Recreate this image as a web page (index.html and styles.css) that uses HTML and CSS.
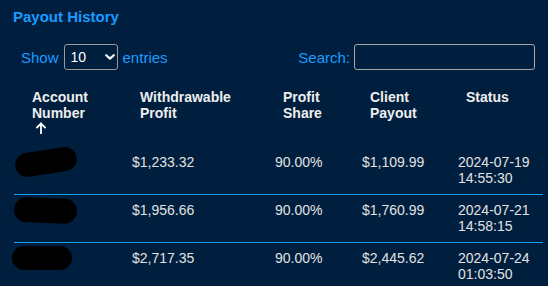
FILE: index.html
```html
<!DOCTYPE html>
<html lang="en">
<head>
<meta charset="utf-8">
<title>Payout History</title>
<link rel="stylesheet" href="styles.css">
</head>
<body>
<div class="panel">
  <h2 class="title">Payout History</h2>
  <div class="controls">
    <label class="length"><span>Show</span><span class="select-wrap"><select class="select"><option>10</option><option>25</option><option>50</option></select><svg class="chev" width="10" height="6" viewBox="0 0 10 6"><path d="M1.2 1.2 L5 4.6 L8.8 1.2" fill="none" stroke="#ffffff" stroke-width="2.2" stroke-linecap="round" stroke-linejoin="round"/></svg></span><span>entries</span></label>
    <label class="search"><span>Search:</span><input class="search-input" type="text"></label>
  </div>
  <table class="grid">
    <colgroup>
      <col class="c1"><col class="c2"><col class="c3"><col class="c4"><col class="c5">
    </colgroup>
    <thead>
      <tr>
        <th>Account Number<div class="sort"><svg width="10" height="12" viewBox="0 0 10 12"><path d="M5 11.5 V1.5 M1 5.5 L5 1.5 L9 5.5" fill="none" stroke="#ffffff" stroke-width="1.8" stroke-linecap="square"/></svg></div></th>
        <th>Withdrawable Profit</th>
        <th>Profit Share</th>
        <th>Client Payout</th>
        <th>Status</th>
      </tr>
    </thead>
    <tbody>
      <tr>
        <td class="acct"><span class="redact r1"></span></td>
        <td>$1,233.32</td>
        <td>90.00%</td>
        <td>$1,109.99</td>
        <td>2024-07-19<br>14:55:30</td>
      </tr>
      <tr>
        <td class="acct"><span class="redact r2"></span></td>
        <td>$1,956.66</td>
        <td>90.00%</td>
        <td>$1,760.99</td>
        <td>2024-07-21<br>14:58:15</td>
      </tr>
      <tr>
        <td class="acct"><span class="redact r3"></span></td>
        <td>$2,717.35</td>
        <td>90.00%</td>
        <td>$2,445.62</td>
        <td>2024-07-24<br>01:03:50</td>
      </tr>
    </tbody>
  </table>
</div>
</body>
</html>
```

FILE: styles.css
```css
html, body {
  margin: 0;
  padding: 0;
  background: #001f3f;
  font-family: "Liberation Sans", Arial, sans-serif;
  overflow: hidden;
}

.panel {
  padding: 8px 5px 0 13px;
}

.title {
  margin: 0;
  font-size: 15px;
  line-height: 18px;
  font-weight: bold;
  color: #1a9cff;
}

.controls {
  display: flex;
  justify-content: space-between;
  align-items: center;
  margin: 18px 0 0 0;
  padding: 0 8px;
  height: 26px;
  font-size: 15px;
  color: #1a9cff;
}

.length, .search {
  display: flex;
  align-items: center;
}

.select-wrap {
  position: relative;
  display: block;
  margin: 0 5px;
  height: 26px;
}

.select {
  -webkit-appearance: none;
  appearance: none;
  display: block;
  box-sizing: border-box;
  width: 54px;
  height: 26px;
  margin: 0;
  padding: 0 0 0 6px;
  border: 1px solid #9a9a9a;
  border-radius: 3px;
  background: transparent;
  color: #ffffff;
  font-family: "Liberation Sans", Arial, sans-serif;
  font-size: 14px;
}

.chev {
  position: absolute;
  left: 41px;
  top: 10px;
  pointer-events: none;
}

.search-input {
  display: block;
  box-sizing: border-box;
  width: 181px;
  height: 26px;
  margin: 0 0 0 4px;
  border: 1px solid #a8a8a8;
  border-radius: 3px;
  background: transparent;
  color: #ffffff;
  font-family: "Liberation Sans", Arial, sans-serif;
  font-size: 14px;
}

.grid {
  table-layout: fixed;
  width: 529px;
  margin: 9px 0 0 1px;
  border-collapse: collapse;
  border-spacing: 0;
}

.c1 { width: 108px; }
.c2 { width: 143px; }
.c3 { width: 87px; }
.c4 { width: 96px; }
.c5 { width: 95px; }

.grid th {
  padding: 10px 18px 8px;
  text-align: left;
  vertical-align: top;
  font-size: 14px;
  line-height: 16px;
  font-weight: bold;
  color: #eeeeee;
}

.sort {
  height: 16px;
}

.sort svg {
  display: block;
  margin: 1px 0 0 4px;
}

.grid td {
  padding: 7px 10px 8px;
  vertical-align: top;
  font-size: 14px;
  line-height: 16px;
  color: #e2e2e2;
  border-top: 1px solid #1e9fff;
}

.grid tbody tr:first-child td {
  border-top-color: transparent;
}

.acct {
  position: relative;
}

.redact {
  position: absolute;
  background: #000000;
  border-radius: 13px;
}

.r1 {
  left: 1px;
  top: 3px;
  width: 62px;
  height: 24px;
  transform: rotate(-9deg);
}

.r2 {
  left: 0;
  top: 3px;
  width: 63px;
  height: 25px;
  transform: rotate(2deg);
}

.r3 {
  left: -2px;
  top: 3px;
  width: 60px;
  height: 24px;
}
```
